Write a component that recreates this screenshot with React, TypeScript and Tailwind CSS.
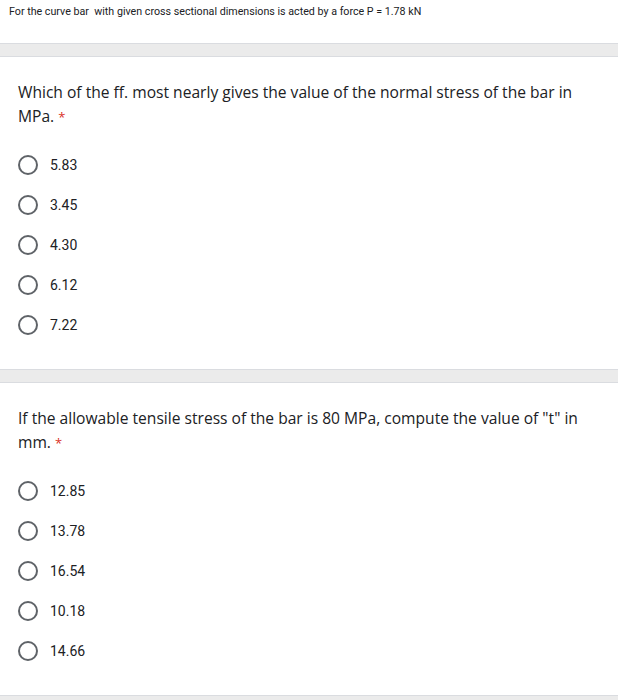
import React from "react";

const Radio = ({ label }: { label: string }) => (
  <div className="flex items-center h-10 gap-3">
    <div className="w-5 h-5 rounded-full border-2 border-[#5f6368] shrink-0" />
    <span className="text-[14px] leading-5 text-[#202124]" style={{ fontFamily: "Roboto, Arial, sans-serif" }}>
      {label}
    </span>
  </div>
);

const Band = () => <div className="h-[14px] bg-[#ebebeb] border-t border-b border-[#dadce0]" />;

const Question = ({ title, last, options }: { title: string; last: string; options: string[] }) => (
  <div className="bg-white px-[18px] pt-[23px] pb-[24px]">
    <div className="text-[15.6px] leading-6 text-[#202124] pr-[8px]" style={{ fontFamily: "'Open Sans', Arial, sans-serif" }}>
      {title} <span className="whitespace-nowrap">{last}</span>
      <span className="text-[#d93025] ml-1 text-[13px]">*</span>
    </div>
    <div className="mt-4 flex flex-col">
      {options.map((o) => (
        <Radio key={o} label={o} />
      ))}
    </div>
  </div>
);

export default function App() {
  return (
    <div className="w-[618px] bg-white">
      <div className="h-[43px] pl-[9px] pt-[4px]">
        <div className="text-[10.7px] leading-4 text-[#202124] whitespace-pre" style={{ fontFamily: "Roboto, Arial, sans-serif" }}>
          {"For the curve bar  with given cross sectional dimensions is acted by a force P = 1.78 kN"}
        </div>
      </div>
      <Band />
      <Question
        title="Which of the ff. most nearly gives the value of the normal stress of the bar in"
        last="MPa."
        options={["5.83", "3.45", "4.30", "6.12", "7.22"]}
      />
      <Band />
      <Question
        title={'If the allowable tensile stress of the bar is 80 MPa, compute the value of "t" in'}
        last="mm."
        options={["12.85", "13.78", "16.54", "10.18", "14.66"]}
      />
      <Band />
    </div>
  );
}
